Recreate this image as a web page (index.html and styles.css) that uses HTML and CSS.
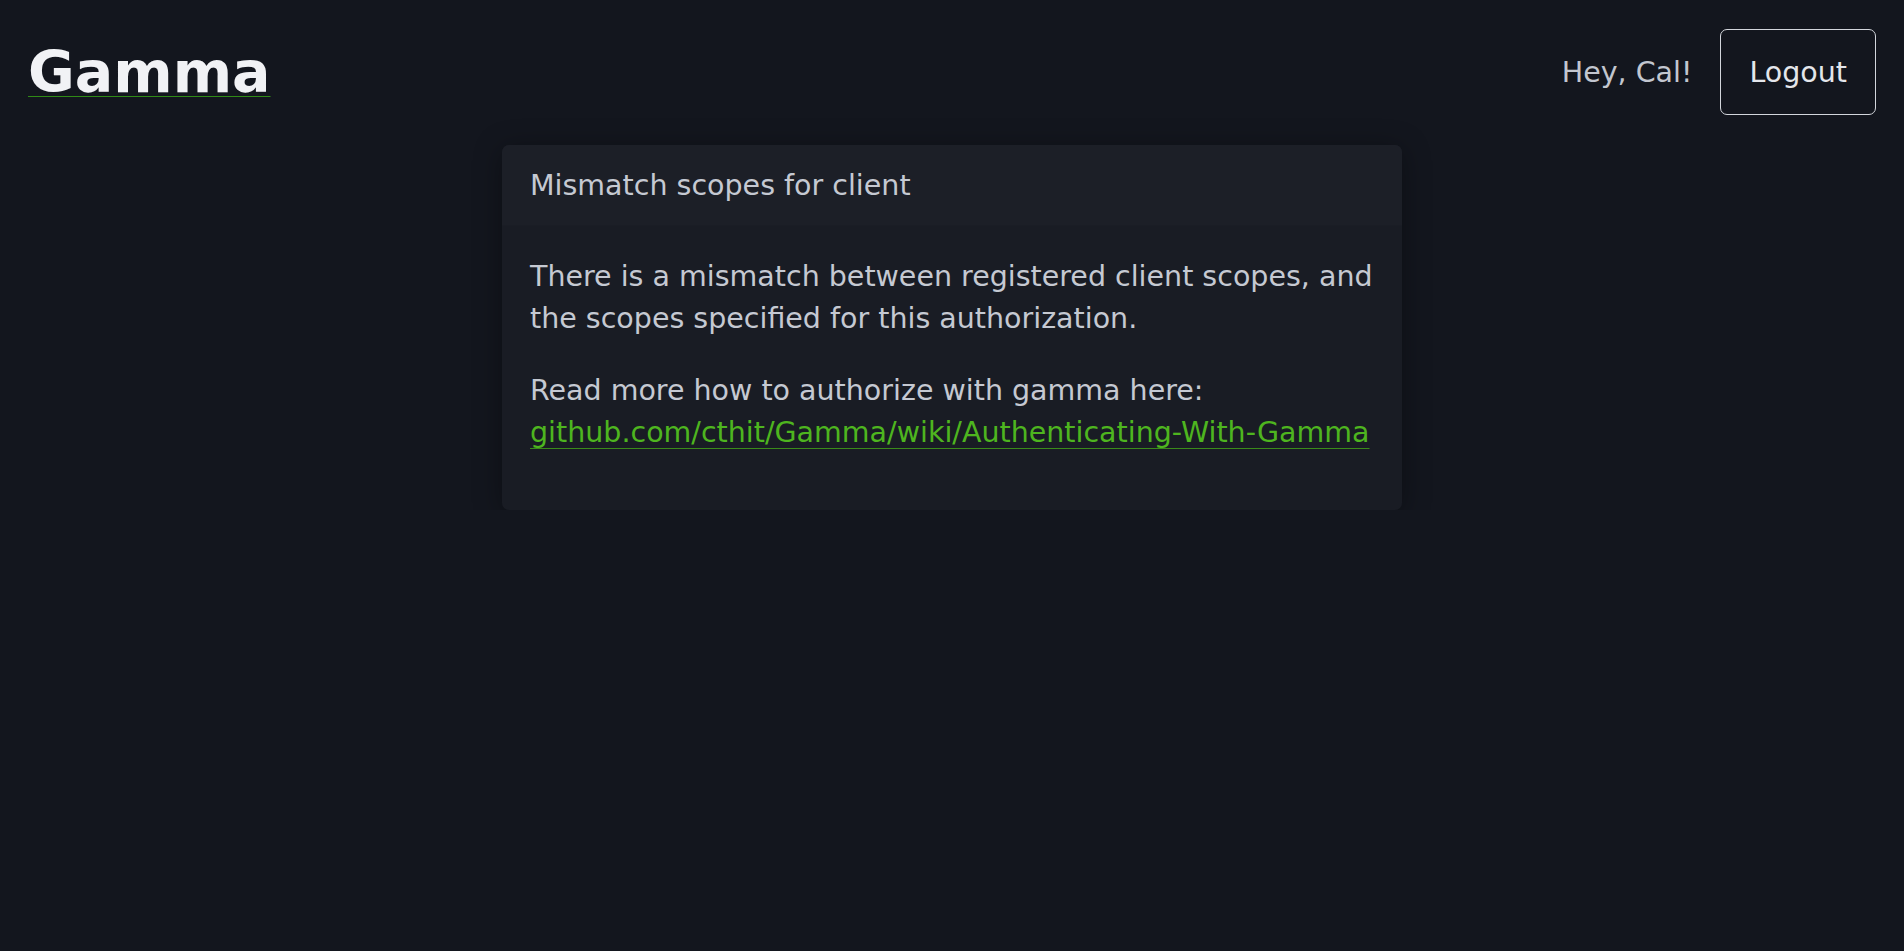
FILE: index.html
```html
<!DOCTYPE html>
<html lang="en">
<head>
  <meta charset="UTF-8">
  <meta name="viewport" content="width=device-width, initial-scale=1.0">
  <title>Gamma</title>
  <link rel="stylesheet" href="styles.css">
</head>
<body>
  <header class="topbar">
    <a href="#" class="brand">Gamma</a>
    <div class="user">
      <span class="greeting">Hey, Cal!</span>
      <button type="button" class="btn-outline">Logout</button>
    </div>
  </header>

  <main>
    <div class="card">
      <div class="card-header">Mismatch scopes for client</div>
      <div class="card-body">
        <p>There is a mismatch between registered client scopes, and the scopes specified for this authorization.</p>
        <p>Read more how to authorize with gamma here:<br>
          <a href="#" class="link">github.com/cthit/Gamma/wiki/Authenticating-With-Gamma</a>
        </p>
      </div>
    </div>
  </main>
</body>
</html>
```

FILE: styles.css
```css
body {
  margin: 0;
  padding: 0;
  background: #13161e;
  color: #c5c9d2;
  font-family: "DejaVu Sans", Verdana, sans-serif;
  font-size: 28.5px;
  line-height: 42px;
}

.topbar {
  display: flex;
  align-items: center;
  justify-content: space-between;
  padding: 29px 28px 0 28px;
}

.brand {
  color: #f1f2f5;
  font-size: 57px;
  font-weight: bold;
  line-height: 86px;
  text-decoration: underline;
  text-decoration-color: #2f8a16;
  text-decoration-thickness: 1px;
  text-underline-offset: 4px;
}

.user {
  display: flex;
  align-items: center;
  gap: 28px;
}

.greeting {
  color: #c2c6cf;
  padding-top: 2px;
}

.btn-outline {
  font-family: inherit;
  font-size: 28.5px;
  line-height: 42px;
  color: #e4e6eb;
  background: transparent;
  border: 1px solid #d3d6dc;
  border-radius: 7px;
  padding: 22px 28px 20px;
  cursor: pointer;
}

.card {
  width: 900px;
  margin: 30px auto 0;
  background: #191c24;
  border-radius: 7px;
  box-shadow: 0 4px 28px rgba(0, 0, 0, 0.35);
  overflow: hidden;
}

.card-header {
  background: #1c1f27;
  padding: 20px 28px 18px;
  border-bottom: 1px solid #1a1d25;
  color: #c5c9d2;
}

.card-body {
  padding: 30px 24px 26px 28px;
}

.card-body p {
  margin: 0 0 30px;
}

.link {
  color: #4eb51f;
  text-decoration: underline;
  text-decoration-color: #3a8a1a;
  text-decoration-thickness: 1px;
  text-underline-offset: 6px;
}
```
